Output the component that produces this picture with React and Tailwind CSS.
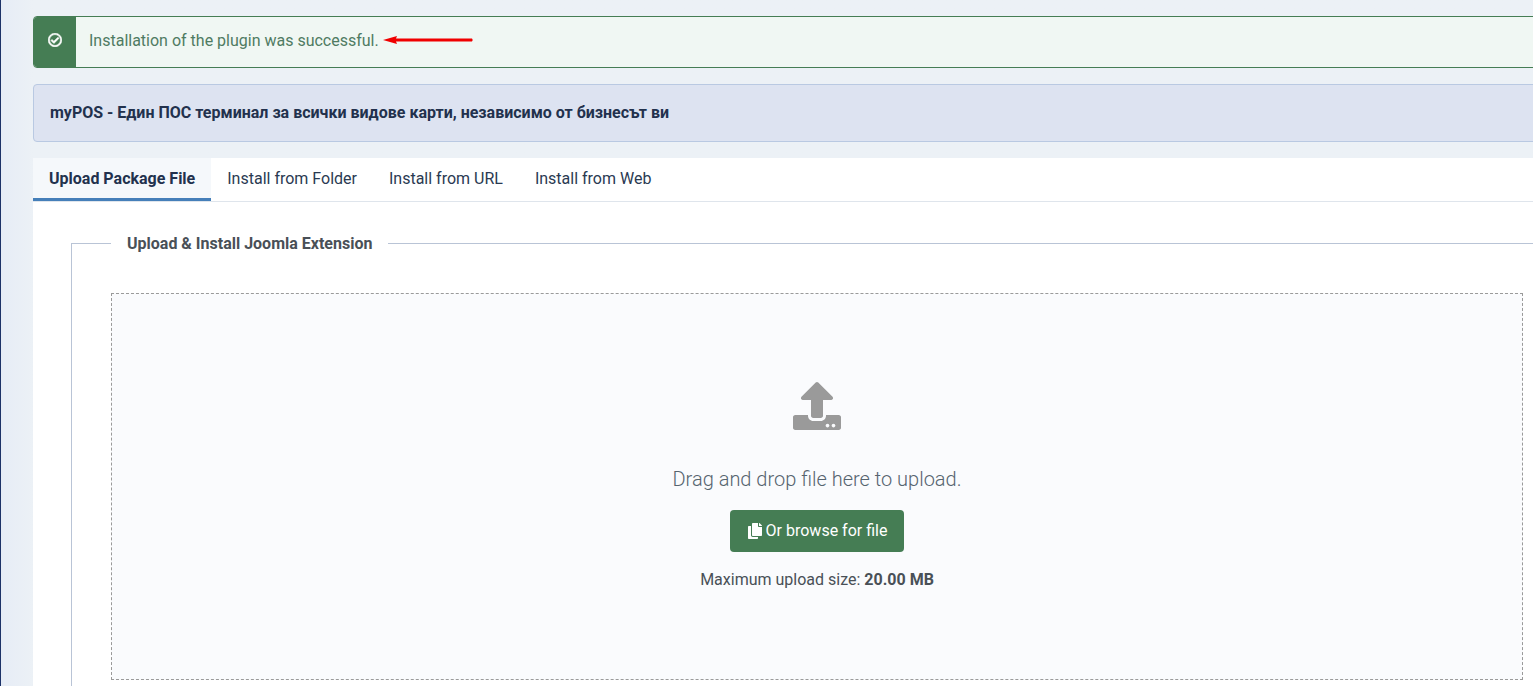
// Joomla extension installer page
import { FaRegCheckCircle, FaUpload, FaCopy } from 'react-icons/fa';

const TABS = ['Install from Folder', 'Install from URL', 'Install from Web'];

const App = () => (
  <div className="h-screen overflow-hidden bg-[#ecf1f6] bg-gradient-to-r from-[#e6ecf6] to-[#ecf1f6] to-[32px] border-l border-[#1c3268] font-['Roboto',sans-serif] text-[16px] leading-[24px]">
    <div className="w-[1560px] pt-4 pl-8">
      {/* Success alert */}
      <div className="relative flex h-[52px] rounded-[4px] border border-[#457d54] bg-[#f0f7f3] overflow-hidden">
        <div className="flex w-[42px] items-center justify-center bg-[#457d54] pb-[5px] text-white">
          <FaRegCheckCircle className="size-[14px]" stroke="currentColor" strokeWidth={24} />
        </div>
        <p className="flex items-center pb-[3px] pl-[13px] text-[#4f7b62]">Installation of the plugin was successful.</p>
        <svg className="absolute left-[348px] top-[17px]" width="92" height="12" viewBox="0 0 92 12">
          <path d="M1 6 L15 2 L14 4.6 L90 4.6 Q91.5 6 90 7.4 L14 7.4 L15 10 Z" fill="#f00000" />
        </svg>
      </div>

      {/* Info banner */}
      <div className="mt-4 flex h-[58px] items-center rounded-[4px] border border-[#b9c9e2] bg-[#dde3f1] pl-4 font-bold text-[#22314d]">
        myPOS - Един ПОС терминал за всички видове карти, независимо от бизнесът ви
      </div>

      {/* Tabs */}
      <div className="mt-4 bg-white pb-6">
        <div className="flex h-[44px] border-b border-[#dfe5ec]">
          <div className="h-[43px] border-b-[3px] border-[#457fb9] bg-[#f5f8fb] px-4 pt-[9px] font-bold text-[#22314d]">
            Upload Package File
          </div>
          {TABS.map((tab) => (
            <div key={tab} className="px-4 pt-[9px] text-[#2a3a52]">{tab}</div>
          ))}
        </div>

        {/* Upload form */}
        <fieldset className="ml-[38px] mt-[28px] border-t border-l border-[#b9c4d6] pb-10 pl-[39px] pt-[37px]">
          <legend className="px-4 pt-[2px] font-bold text-[#495057]">Upload &amp; Install Joomla Extension</legend>
          <div className="flex h-[387px] w-[1412px] flex-col items-center border border-dashed border-[#9a9a9a] bg-[#fafbfd] pt-[88px]">
            <FaUpload className="size-[48px] text-[#9a9a9a]" />
            <p className="mt-[34px] text-[20px] font-light leading-[30px] text-[#56646f]">Drag and drop file here to upload.</p>
            <button className="mt-4 flex h-[42px] w-[174px] items-center justify-center gap-[3px] rounded-[4px] bg-[#457d54] text-white">
              <FaCopy className="size-[16px]" />
              Or browse for file
            </button>
            <p className="mt-4 text-[#495057]">
              Maximum upload size: <strong className="font-bold">20.00 MB</strong>
            </p>
          </div>
        </fieldset>
      </div>
    </div>
  </div>
);

export default App;
